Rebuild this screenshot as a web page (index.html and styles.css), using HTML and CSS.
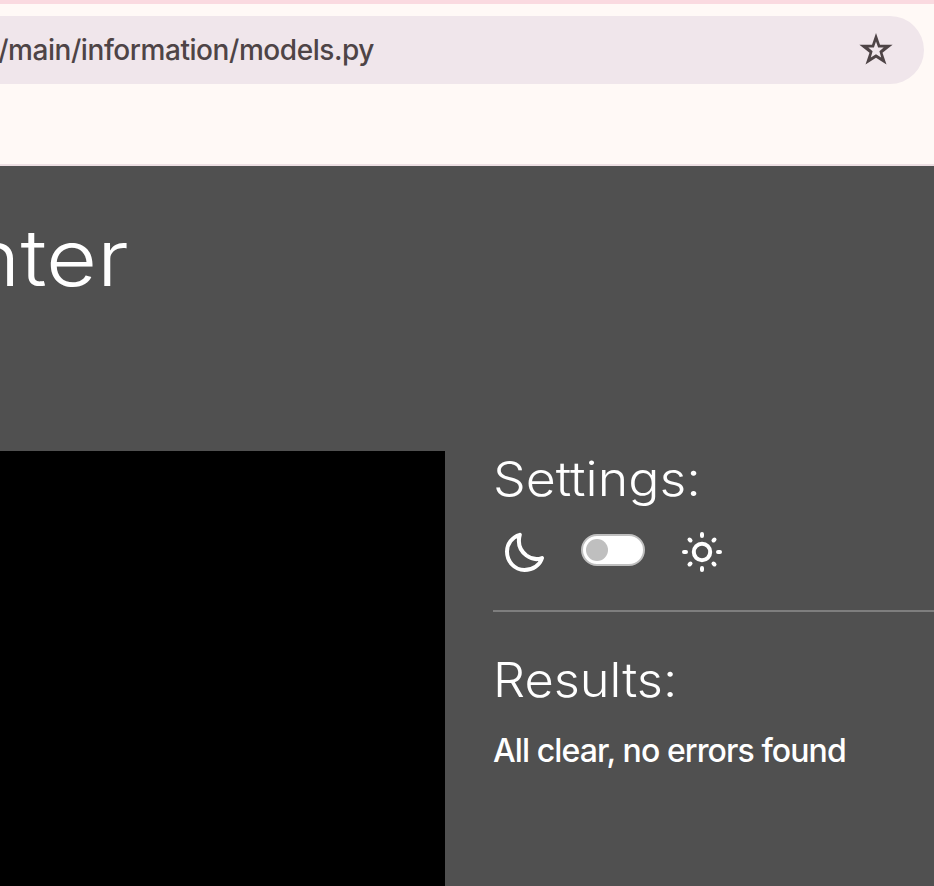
FILE: index.html
```html
<!DOCTYPE html>
<html lang="en">
<head>
<meta charset="utf-8">
<title>Linter</title>
<link rel="stylesheet" href="styles.css">
</head>
<body>
<div class="toolbar">
  <div class="address">
    <div class="url"><span>b/main/information/models.py</span></div>
    <svg class="star" viewBox="0 0 34 34"><path fill-rule="evenodd" d="M17 0L21 11.800H33.600L23.500 19.700L27.500 31.500L17 24.800L6.500 31.500L10.500 19.700L.4 11.800H13ZM17 8.500L14.900 14.600H9.300L13.600 18.200L11.800 24.600L17 21.200L22.200 24.600L20.400 18.200L24.700 14.600H19.100Z"/></svg>
  </div>
</div>
<main class="page">
  <h1 class="title"><span>nter</span></h1>
  <div class="columns">
    <div class="editor"></div>
    <aside class="panel">
      <h2 class="settings-title">Settings:</h2>
      <div class="theme">
        <svg class="moon" viewBox="0 0 42 42"><path d="M16.800 3.800C9 6 4 13 4 20.500C4 30.500 11.500 39 21.500 39C30 39 37 34 39 27C34 29 28 27.800 23.500 24.500C17 19.500 14.500 12 16.800 3.800Z"/></svg>
        <div class="switch"><span class="knob"></span></div>
        <svg class="sun" viewBox="0 0 42 42"><circle cx="21" cy="21" r="8.200"/><path d="M21 3V5M21 37V39M3 21H5M37 21H39M8.500 8.500L9.500 9.500M32.500 32.500L33.500 33.500M8.500 33.500L9.500 32.500M32.500 9.500L33.500 8.500"/></svg>
      </div>
      <hr class="divider">
      <h2 class="results-title">Results:</h2>
      <p class="message">All clear, no errors found</p>
    </aside>
  </div>
</main>
</body>
</html>
```
FILE: styles.css
```css
* { box-sizing: border-box; }
body {
  margin: 0;
  height: 886px;
  overflow: hidden;
  display: flex;
  flex-direction: column;
  background: #505050;
  color: #fff;
  font-family: Inter, sans-serif;
}
.toolbar {
  height: 166px;
  flex: none;
  padding: 12px 10px 0 0;
  background: #fff9f6;
  border-top: 4px solid #fadae0;
  border-bottom: 2px solid #eddfe3;
}
.address {
  height: 68px;
  display: flex;
  align-items: center;
  justify-content: space-between;
  padding-right: 31px;
  border-radius: 0 34px 34px 0;
  background: #f0e6eb;
  color: #4e4446;
}
.url {
  width: 374px;
  display: flex;
  justify-content: flex-end;
  overflow: hidden;
  white-space: nowrap;
  font-size: 28px;
  font-weight: 450;
  letter-spacing: -0.44px;
  line-height: 40px;
}
.star { width: 34px; height: 34px; fill: #4e4446; }
.page {
  flex: 1;
  display: flex;
  flex-direction: column;
}
h1, h2, p { margin: 0; }
h1, h2 { font-weight: 300; }
.title {
  width: 129px;
  height: 285px;
  padding-top: 42px;
  display: flex;
  justify-content: flex-end;
  overflow: hidden;
  font-size: 78px;
  line-height: 100px;
}
.title span {
  transform: scaleX(1.13);
  transform-origin: right;
}
.columns { flex: 1; display: flex; }
.editor { width: 445px; background: #000; }
.panel { flex: 1; padding-left: 48px; }
.settings-title, .results-title {
  width: max-content;
  font-size: 48px;
  line-height: 58px;
  white-space: nowrap;
  transform-origin: left;
}
.settings-title { transform: translateY(-1px) scaleX(1.08); }
.results-title { transform: translateY(-1px) scaleX(1.053); }
.theme {
  height: 42px;
  margin-top: 22px;
  padding-left: 10px;
  display: flex;
}
.moon, .sun {
  width: 42px;
  height: 42px;
  fill: none;
  stroke: #fff;
  stroke-width: 4;
  stroke-linecap: round;
  stroke-linejoin: round;
}
.switch {
  width: 64px;
  height: 32px;
  margin: 3px 36px 0;
  padding: 3px;
  border: 2px solid #bfbfbf;
  border-radius: 16px;
  background: #fff;
}
.knob {
  display: block;
  width: 22px;
  height: 22px;
  border-radius: 50%;
  background: #bfbfbf;
}
.divider {
  height: 2px;
  margin: 37px 0 0;
  border: 0;
  background: #7e7e7e;
}
.results-title { margin-top: 40px; }
.message {
  margin-top: 21px;
  font-size: 32px;
  line-height: 40px;
  font-weight: 500;
  letter-spacing: -0.9px;
  white-space: nowrap;
}
```
